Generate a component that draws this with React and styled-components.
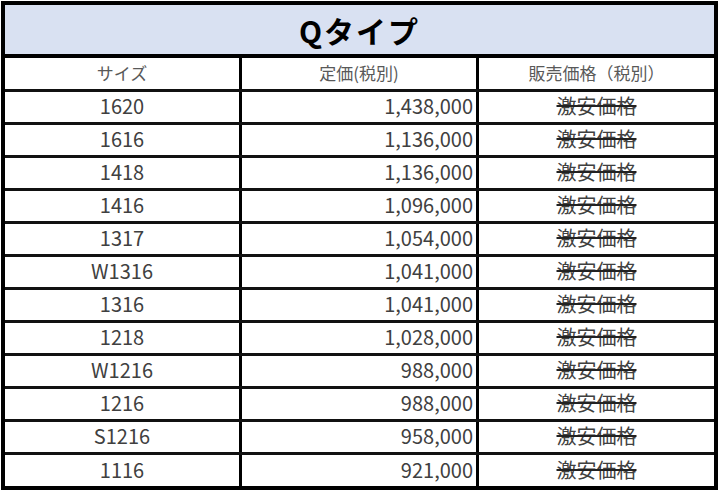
import styled, { createGlobalStyle } from 'styled-components';

const GlobalStyle = createGlobalStyle`
  html, body {
    margin: 0;
    padding: 0;
    background: #ffffff;
  }
  body {
    font-family: "Noto Sans CJK JP", "Noto Sans", sans-serif;
  }
`;

const rows = [
  ['1620', '1,438,000'],
  ['1616', '1,136,000'],
  ['1418', '1,136,000'],
  ['1416', '1,096,000'],
  ['1317', '1,054,000'],
  ['W1316', '1,041,000'],
  ['1316', '1,041,000'],
  ['1218', '1,028,000'],
  ['W1216', '988,000'],
  ['1216', '988,000'],
  ['S1216', '958,000'],
  ['1116', '921,000'],
];

const Page = styled.div`
  padding: 1px 0 0 1px;
`;

const PriceTable = styled.div`
  width: 717px;
  box-sizing: border-box;
  border: 4px solid #000;
  background: #fff;
`;

const Title = styled.div`
  height: 49px;
  border-bottom: 4px solid #000;
  background: #d9e1f2;
  display: flex;
  align-items: center;
  justify-content: center;
  font-size: 30px;
  font-weight: 700;
  color: #000;
  letter-spacing: 2px;
`;

const Row = styled.div`
  display: grid;
  grid-template-columns: 237px 237px 235px;
  height: ${(p) => p.$height}px;
  border-bottom: ${(p) => (p.$last ? 'none' : '3px solid #111')};
`;

const Cell = styled.div`
  display: flex;
  align-items: center;
  justify-content: ${(p) => (p.$align === 'right' ? 'flex-end' : 'center')};
  padding-right: ${(p) => (p.$align === 'right' ? '3px' : '0')};
  padding-bottom: 2px;
  box-sizing: border-box;
  border-right: ${(p) => (p.$end ? 'none' : '3px solid #000')};
  font-size: ${(p) => (p.$head ? '17px' : '20px')};
  color: ${(p) => (p.$head ? '#595959' : '#404040')};
  line-height: 1;
  white-space: nowrap;
`;

const Struck = styled.span`
  text-decoration: line-through;
  text-decoration-color: #222;
  text-decoration-thickness: 1.5px;
`;

export default function App() {
  return (
    <Page>
      <GlobalStyle />
      <PriceTable>
        <Title>Qタイプ</Title>
        <Row $height={31}>
          <Cell $head>サイズ</Cell>
          <Cell $head>定価(税別)</Cell>
          <Cell $head $end>販売価格（税別）</Cell>
        </Row>
        {rows.map(([size, price], i) => (
          <Row key={size + i} $height={i === rows.length - 1 ? 31 : 30} $last={i === rows.length - 1}>
            <Cell>{size}</Cell>
            <Cell $align="right">{price}</Cell>
            <Cell $end>
              <Struck>激安価格</Struck>
            </Cell>
          </Row>
        ))}
      </PriceTable>
    </Page>
  );
}
